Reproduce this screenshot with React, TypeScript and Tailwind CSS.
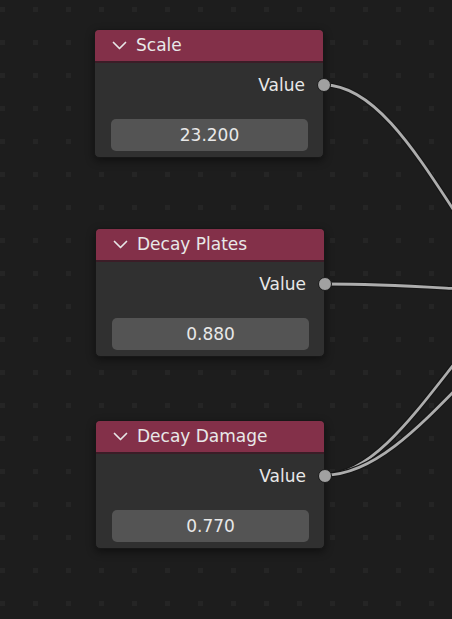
import React from 'react';

type NodeData = {
  title: string;
  value: string;
  pos: string;
};

// canvas nodes, placed where they sit in the editor
const NODES: NodeData[] = [
  { title: 'Scale', value: '23.200', pos: 'left-[94px] top-[29px]' },
  { title: 'Decay Plates', value: '0.880', pos: 'left-[95px] top-[228px]' },
  { title: 'Decay Damage', value: '0.770', pos: 'left-[95px] top-[420px]' },
];

const WIRES = [
  'M324 85 C420 85 484 330 580 330',
  'M325 284 C420 284 470 292 560 292',
  'M325 475 C410 475 485 270 570 270',
  'M325 475 C420 475 505 290 600 290',
];

function Chevron() {
  return (
    <svg width="15" height="9" viewBox="0 0 15 9" className="shrink-0">
      <path d="M1.5 1.5 L7.5 7.5 L13.5 1.5" fill="none" stroke="#e6e6e6" strokeWidth="1.7" strokeLinecap="round" strokeLinejoin="round" />
    </svg>
  );
}

function ValueNode({ node }: { node: NodeData }) {
  return (
    <div className={`absolute ${node.pos} w-[230px] rounded-[5px] border border-[#171717] bg-[#303030] shadow-[0_3px_8px_rgba(0,0,0,0.45)]`}>
      <div className="flex h-[33px] items-center gap-[9px] rounded-t-[4px] border-b-2 border-[#3b1d27] bg-[#833049] pl-[17px] text-[17px] text-[#e8e8e8]">
        <Chevron />
        <span className="leading-none">{node.title}</span>
      </div>
      <div className="relative mt-[9px] flex h-[26px] items-center justify-end pr-[18px] text-[17px] text-[#e8e8e8]">
        <span className="leading-none">Value</span>
        <div className="absolute right-[-8px] top-1/2 h-[14px] w-[14px] -translate-y-1/2 rounded-full border-[1.5px] border-[#1a1a1a] bg-[#a1a1a1]" />
      </div>
      <div className="mb-[6px] ml-[16px] mt-[21px] flex h-[32px] w-[197px] items-center justify-center rounded-[5px] bg-[#545454] text-[17px] text-[#e8e8e8]">
        <span className="leading-none">{node.value}</span>
      </div>
    </div>
  );
}

export default function App() {
  return (
    <div className="relative h-[619px] w-[452px] overflow-hidden bg-[#1d1d1d] font-['DejaVu_Sans',sans-serif]">
      <svg className="absolute inset-0" width="452" height="619">
        <defs>
          <pattern id="grid" x="0" y="7" width="33" height="33" patternUnits="userSpaceOnUse">
            <rect x="0" y="0" width="5" height="5" fill="#252525" />
          </pattern>
        </defs>
        <rect width="452" height="619" fill="url(#grid)" />
        {WIRES.map((d, i) => (
          <g key={i} fill="none">
            <path d={d} stroke="#161616" strokeWidth="5" />
            <path d={d} stroke="#adadad" strokeWidth="2.8" />
          </g>
        ))}
      </svg>
      {NODES.map((n) => (
        <ValueNode key={n.title} node={n} />
      ))}
    </div>
  );
}
